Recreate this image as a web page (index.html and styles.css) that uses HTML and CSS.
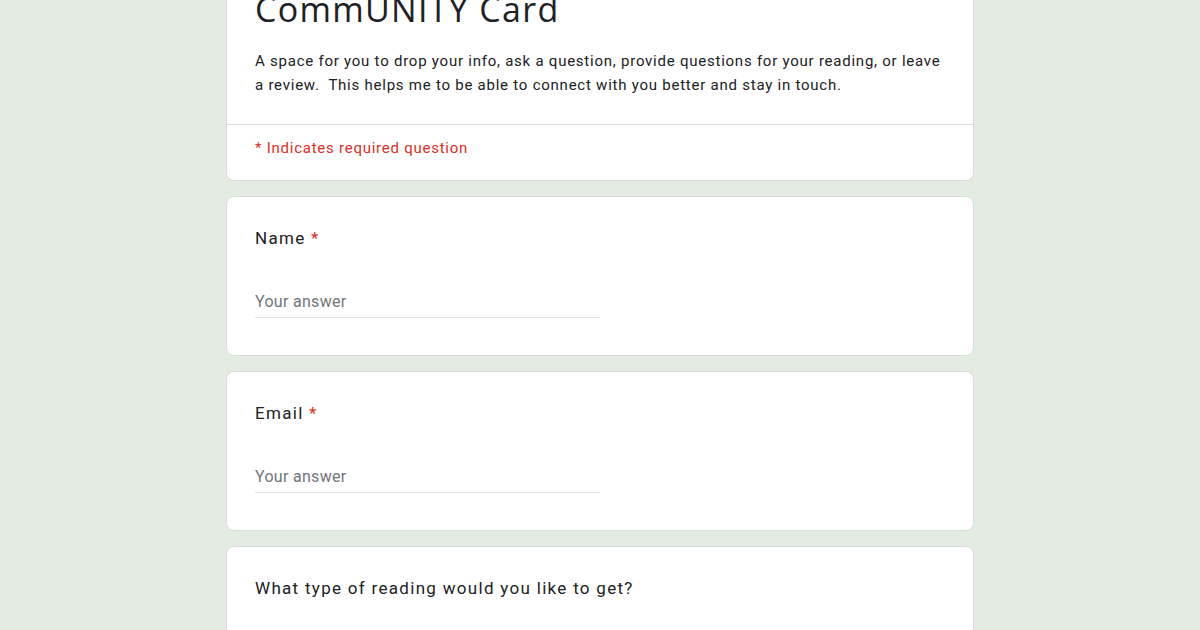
FILE: index.html
```html
<!DOCTYPE html>
<html lang="en">
<head>
    <meta charset="UTF-8">
    <meta name="viewport" content="width=device-width, initial-scale=1.0">
    <title>CommUNITY Card</title>
    <link rel="stylesheet" href="styles.css">
</head>
<body>

    <div class="form-wrap">

        <!-- Header card -->
        <div class="card header-card">
            <div class="header-top">
                <h1 class="form-title">CommUNITY Card</h1>
                <p class="form-desc">A space for you to drop your info, ask a question, provide questions for your reading, or leave a review.&nbsp; This helps me to be able to connect with you better and stay in touch.</p>
            </div>
            <div class="required-note">* Indicates required question</div>
        </div>

        <!-- Questions -->
        <div class="card question">
            <div class="q-title">Name <span class="req">*</span></div>
            <div class="answer"><input type="text" placeholder="Your answer"></div>
        </div>

        <div class="card question">
            <div class="q-title">Email <span class="req">*</span></div>
            <div class="answer"><input type="text" placeholder="Your answer"></div>
        </div>

        <div class="card question">
            <div class="q-title">What type of reading would you like to get?</div>
        </div>

    </div>

</body>
</html>
```

FILE: styles.css
```css
/* General Page Style */
body {
    font-family: Roboto, Arial, sans-serif;
    margin: 0;
    padding: 0;
    background-color: #e2ece0;
    color: #202124;
    overflow: hidden;
    height: 630px;
}

.form-wrap {
    width: 748px;
    margin: -34px auto 0;
    display: flex;
    flex-direction: column;
    gap: 15px;
}

/* Cards */
.card {
    background-color: #fff;
    border: 1px solid #dadce0;
    border-radius: 8px;
}

.header-top {
    padding: 24px 28px 27px;
    border-bottom: 1px solid #dadce0;
}

.form-title {
    font-family: "Open Sans", Arial, sans-serif;
    font-weight: 400;
    font-size: 34px;
    line-height: 40px;
    letter-spacing: 1.3px;
    margin: -2px 0 0;
}

.form-desc {
    margin: 20px 0 0;
    font-size: 15px;
    line-height: 24px;
    letter-spacing: 0.76px;
}

.required-note {
    padding: 13px 28px 22px;
    font-size: 15px;
    line-height: 20px;
    color: #d93025;
    letter-spacing: 0.75px;
}

/* Question cards */
.question {
    padding: 29px 28px 37px;
}

.q-title {
    font-size: 17px;
    line-height: 24px;
    letter-spacing: 1.3px;
}

.req {
    color: #d93025;
}

.answer {
    margin-top: 35px;
    width: 345px;
}

.answer input {
    width: 100%;
    box-sizing: border-box;
    height: 33px;
    border: none;
    border-bottom: 1px solid #e0e0e0;
    padding: 0;
    font-family: Roboto, Arial, sans-serif;
    font-size: 16px;
    letter-spacing: 0.3px;
    outline: none;
}

.answer input::placeholder {
    color: #70757a;
}
```
